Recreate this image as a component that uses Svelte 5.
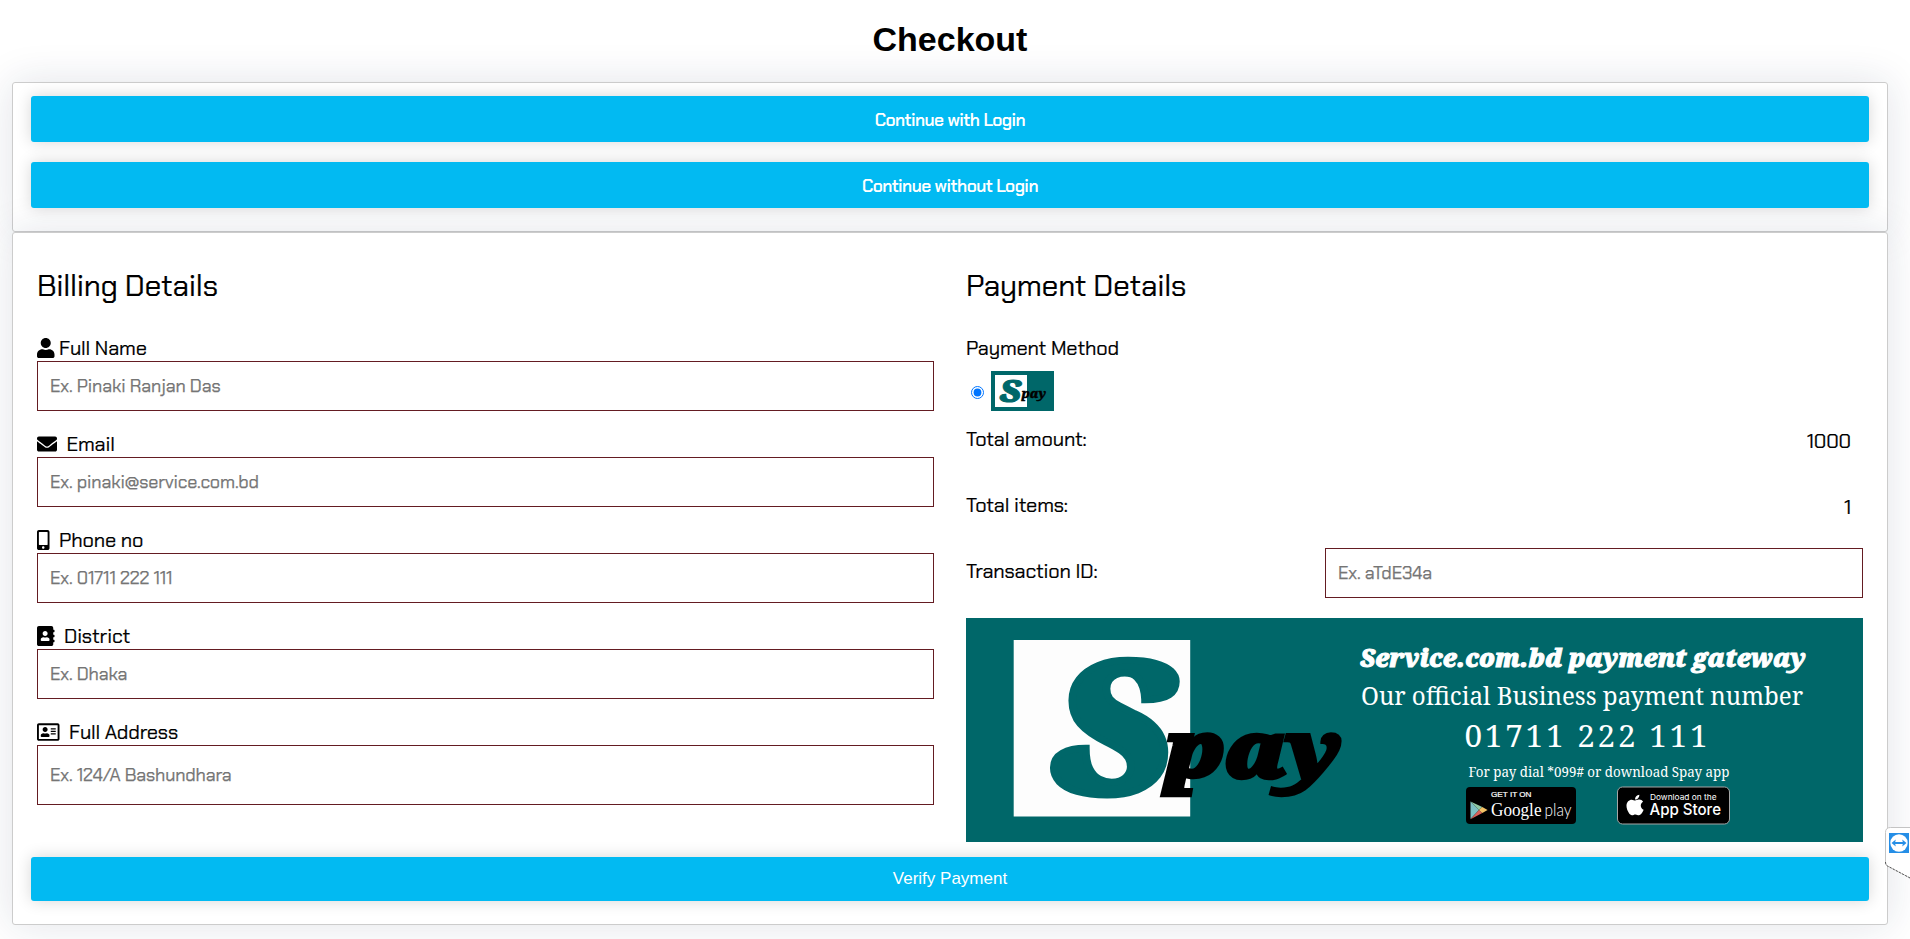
<script>
  const fields = [
    {
      icon: 'user', w: 448, label: 'Full Name', gap: 4.5, placeholder: 'Ex. Pinaki Ranjan Das',
      d: 'M224 256c70.7 0 128-57.3 128-128S294.7 0 224 0 96 57.3 96 128s57.3 128 128 128zm89.6 32h-16.7c-22.2 10.2-46.9 16-72.9 16s-50.600-5.800-72.900-16h-16.700C60.200 288 0 348.200 0 422.400V464c0 26.500 21.500 48 48 48h352c26.500 0 48-21.500 48-48v-41.600c0-74.200-60.200-134.400-134.400-134.400z'
    },
    {
      icon: 'envelope', w: 512, label: 'Email', gap: 9.5, placeholder: 'Ex. pinaki@service.com.bd',
      d: 'M502.3 190.8c3.9-3.1 9.7-.2 9.7 4.7V400c0 26.500-21.500 48-48 48H48c-26.500 0-48-21.500-48-48V195.600c0-5 5.700-7.800 9.700-4.700 22.400 17.400 52.100 39.500 154.100 113.600 21.100 15.400 56.700 47.800 92.200 47.600 35.700.3 72-32.800 92.300-47.600 102-74.100 131.600-96.300 154-113.700zM256 320c23.200.4 56.600-29.200 73.400-41.400 132.700-96.300 142.800-104.700 173.400-128.700 5.800-4.500 9.200-11.500 9.200-18.900v-19c0-26.500-21.500-48-48-48H48c-26.500 0-48 21.500-48 48v19c0 7.400 3.400 14.300 9.200 18.900 30.600 23.900 40.700 32.400 173.400 128.700 16.800 12.200 50.200 41.800 73.400 41.400z'
    },
    {
      icon: 'mobile', w: 320, label: 'Phone no', gap: 9.5, placeholder: 'Ex. 01711 222 111',
      d: 'M272 0H48C21.500 0 0 21.500 0 48v416c0 26.500 21.500 48 48 48h224c26.500 0 48-21.500 48-48V48c0-26.500-21.500-48-48-48zM160 480c-17.700 0-32-14.300-32-32s14.300-32 32-32 32 14.300 32 32-14.300 32-32 32zm112-108c0 6.600-5.400 12-12 12H60c-6.600 0-12-5.400-12-12V60c0-6.600 5.400-12 12-12h200c6.600 0 12 5.400 12 12v312z'
    },
    {
      icon: 'book', w: 448, label: 'District', gap: 9.5, placeholder: 'Ex. Dhaka',
      d: 'M436 160c6.600 0 12-5.400 12-12v-40c0-6.600-5.400-12-12-12h-20V48c0-26.500-21.500-48-48-48H48C21.500 0 0 21.500 0 48v416c0 26.500 21.500 48 48 48h320c26.500 0 48-21.500 48-48v-48h20c6.600 0 12-5.400 12-12v-40c0-6.600-5.400-12-12-12h-20v-64h20c6.600 0 12-5.400 12-12v-40c0-6.600-5.400-12-12-12h-20v-64h20zm-228-32c35.300 0 64 28.700 64 64s-28.700 64-64 64-64-28.700-64-64 28.700-64 64-64zm112 236.800c0 10.600-10 19.200-22.400 19.200H118.400C106 384 96 375.400 96 364.800v-19.200c0-31.800 30.100-57.600 67.200-57.600h5c12.300 5.100 25.700 8 39.800 8s27.600-2.900 39.800-8h5c37.100 0 67.200 25.800 67.200 57.600v19.200z'
    },
    {
      icon: 'card', w: 576, label: 'Full Address', gap: 9.5, placeholder: 'Ex. 124/A Bashundhara', area: true,
      d: 'M528 32H48C21.500 32 0 53.500 0 80v352c0 26.500 21.500 48 48 48h480c26.500 0 48-21.500 48-48V80c0-26.500-21.500-48-48-48zm0 400H48V80h480v352zM208 256c35.300 0 64-28.700 64-64s-28.700-64-64-64-64 28.700-64 64 28.700 64 64 64zm-89.600 128h179.200c12.400 0 22.400-8.600 22.400-19.200v-19.200c0-31.800-30.100-57.600-67.200-57.600-10.800 0-18.700 8-44.800 8-26.900 0-33.400-8-44.800-8-37.100 0-67.200 25.800-67.200 57.600v19.200c0 10.600 10 19.200 22.400 19.200zM360 320h112c4.400 0 8-3.600 8-8v-16c0-4.400-3.600-8-8-8H360c-4.400 0-8 3.600-8 8v16c0 4.400 3.600 8 8 8zm0-64h112c4.400 0 8-3.600 8-8v-16c0-4.400-3.600-8-8-8H360c-4.400 0-8 3.600-8 8v16c0 4.400 3.600 8 8 8zm0-64h112c4.400 0 8-3.600 8-8v-16c0-4.400-3.600-8-8-8H360c-4.400 0-8 3.600-8 8v16c0 4.400 3.600 8 8 8z'
    }
  ];
</script>

<main>
  <h1>Checkout</h1>

  <section class="card login">
    <button class="btn">Continue with Login</button>
    <button class="btn">Continue without Login</button>
  </section>

  <section class="card form">
    <div class="columns">
      <div class="col">
        <h2>Billing Details</h2>
        {#each fields as f}
          <label class="field">
            <span class="label" style="gap:{f.gap}px">
              <svg width={(f.w / 512) * 20} height="20" viewBox="0 0 {f.w} 512"><path d={f.d} /></svg>
              <span>{f.label}</span>
            </span>
            {#if f.area}
              <textarea placeholder={f.placeholder}></textarea>
            {:else}
              <input type="text" placeholder={f.placeholder} />
            {/if}
          </label>
        {/each}
      </div>

      <div class="col">
        <h2>Payment Details</h2>
        <div class="label"><span>Payment Method</span></div>
        <div class="method">
          <input type="radio" name="method" checked />
          <svg class="logo" width="63" height="40" viewBox="0 0 63 40">
            <rect width="63" height="40" fill="#006769" />
            <rect x="4" y="4" width="32" height="32" fill="#fff" />
            <text class="slab" x="8.300" y="30.500" font-size="31.500" fill="#006769" stroke="#006769" stroke-width="1" textLength="22" lengthAdjust="spacingAndGlyphs">S</text>
            <text class="slab" x="30.800" y="27" font-size="13" stroke="#000" stroke-width=".4" textLength="24.500" lengthAdjust="spacingAndGlyphs">pay</text>
          </svg>
        </div>
        <div class="row"><span>Total amount:</span><span class="value">1000</span></div>
        <div class="row"><span>Total items:</span><span class="value">1</span></div>
        <div class="row last"><span>Transaction ID:</span><input type="text" placeholder="Ex. aTdE34a" /></div>

        <svg class="banner" width="897" height="224" viewBox="0 0 897 224">
          <rect width="897" height="224" fill="#006769" />
          <rect x="47.700" y="22" width="176.500" height="176.500" fill="#fdfdfd" />
          <text class="slab" x="84" y="175" font-size="182" fill="#006769" stroke="#006769" stroke-width="7" textLength="124" lengthAdjust="spacingAndGlyphs">S</text>
          <text class="slab" x="201" y="158.500" font-size="77" stroke="#000" stroke-width="4.500" textLength="175" lengthAdjust="spacingAndGlyphs">pay</text>
          <g fill="#fff">
            <text class="slab" x="394" y="49" font-size="25" stroke="#fff" stroke-width="1" textLength="446" lengthAdjust="spacingAndGlyphs">Service.com.bd payment gateway</text>
            <text class="serif" x="395" y="87.300" font-size="24.500" textLength="442" lengthAdjust="spacingAndGlyphs">Our official Business payment number</text>
            <text class="serif" x="498.500" y="128.700" font-size="31.500" textLength="243" lengthAdjust="spacing">01711 222 111</text>
            <text class="serif" x="502.500" y="158.700" font-size="13.500" textLength="261" lengthAdjust="spacingAndGlyphs">For pay dial *099# or download Spay app</text>
          </g>

          <rect x="500" y="169" width="110" height="37" rx="4" />
          <path d="M504.500 183.500v17.500l8.500-9z" fill="#7cc0c4" />
          <path d="M504.500 183.500l8.500 8.500 3.300-3z" fill="#8fc9a4" />
          <path d="M504.500 201.300l8.500-9.300 3.300 3z" fill="#d9605a" />
          <path d="M516.300 189l5.300 3-5.300 3-3.300-3z" fill="#f2c265" />
          <g fill="#fff">
            <text class="sans" x="525" y="178.700" font-size="7.700" stroke="#fff" stroke-width=".2" textLength="40.500" lengthAdjust="spacingAndGlyphs">GET IT ON</text>
            <text class="times" x="525" y="197.700" font-size="18.500" textLength="50.500" lengthAdjust="spacingAndGlyphs">Google</text>
            <text class="lato" x="578.500" y="197.700" font-size="17.500" textLength="27" lengthAdjust="spacingAndGlyphs">play</text>
          </g>

          <rect x="651.500" y="169" width="112" height="37" rx="5" stroke="#a6a6a6" />
          <path transform="translate(660.300 175.200) scale(.0455 .046)" fill="#fff" d="M318.700 268.700c-.2-36.700 16.400-64.400 50-84.800-18.800-26.900-47.200-41.700-84.700-44.600-35.500-2.800-74.300 20.700-88.500 20.700-15 0-49.400-19.700-76.400-19.700C63.300 141.200 4 184.800 4 273.500q0 39.300 14.400 81.200c12.800 36.700 59 126.700 107.200 125.200 25.200-.6 43-17.900 75.800-17.900 31.800 0 48.300 17.900 76.400 17.900 48.600-.7 90.400-82.500 102.600-119.300-65.200-30.700-61.700-90-61.700-91.900zm-56.600-164.200c27.300-32.400 24.800-61.900 24-72.500-24.100 1.400-52 16.400-67.900 34.900-17.500 19.800-27.800 44.300-25.600 71.900 26.100 2 49.900-11.400 69.500-34.300z" />
          <g fill="#fff">
            <text class="inter" x="684" y="182.300" font-size="7.800" textLength="66.500" lengthAdjust="spacingAndGlyphs">Download on the</text>
            <text class="inter medium" x="683.500" y="197.300" font-size="16" textLength="71.500" lengthAdjust="spacingAndGlyphs">App Store</text>
          </g>
        </svg>
      </div>
    </div>
    <button class="btn verify">Verify Payment</button>
  </section>
</main>

<svg class="widget" width="25" height="52" viewBox="0 0 25 52">
  <path d="M26 .5H5.500q-5 0-5 5V36q0 2 2 3l23.500 12.500" fill="#fff" stroke="#c4c4c4" />
  <path d="M.5 35q0 3 2 4l23.500 12.500" fill="none" stroke="#555" stroke-dasharray="2 1.500" />
  <rect x="4" y="6" width="20" height="20" fill="#258ee6" />
  <circle cx="14" cy="16" r="8.700" fill="#fff" />
  <path d="M6.500 16l4.300-3.600-.6 2.500h7.600l-.6-2.500 4.300 3.600-4.300 3.600.6-2.500h-7.600l.6 2.500z" fill="#258ee6" />
</svg>

<style>
  :global(body) {
    background: #fff;
    height: 939px;
    overflow: hidden;
  }
  main {
    box-sizing: border-box;
    width: 1900px;
    padding: 19px 12px 0;
    font-family: 'Chakra Petch', Roboto, sans-serif;
    color: #000;
  }
  h1 {
    margin: 0 0 23px;
    font: bold 34px/40px 'Liberation Sans', Arial, sans-serif;
    text-align: center;
  }
  .card {
    box-sizing: border-box;
    border: 1px solid #ccc;
    border-radius: 3px;
    box-shadow: 0 0 40px rgba(25, 35, 75, 0.13);
  }
  .login {
    display: flex;
    flex-direction: column;
    gap: 20px;
    height: 150px;
    padding: 13px 18px;
  }
  .form {
    height: 693px;
    padding: 34px 18px 0;
    background: #fff;
  }
  .btn {
    display: block;
    width: 100%;
    height: 46px;
    padding: 1px 0 0;
    border: 0;
    border-radius: 3px;
    background: #02baf2;
    box-shadow: 0 0 16px rgba(0, 0, 0, 0.16);
    color: #fff;
    font: 600 17.3px 'Chakra Petch', Roboto, sans-serif;
    letter-spacing: -0.54px;
  }
  .verify {
    height: 44px;
    padding: 0;
    font: 17px 'Liberation Sans', Arial, sans-serif;
    letter-spacing: 0;
  }
  .columns {
    display: grid;
    grid-template-columns: 897px 897px;
    gap: 32px;
    height: 590px;
    padding: 0 6px;
    -webkit-text-stroke: 0.2px;
  }
  .columns svg {
    -webkit-text-stroke: 0;
  }
  h2 {
    margin: 0 0 33px;
    font-size: 30px;
    font-weight: 400;
    line-height: 37px;
    letter-spacing: -0.25px;
  }
  .field {
    display: block;
    margin-bottom: 22px;
  }
  .label {
    display: flex;
    align-items: center;
    height: 24px;
    font-size: 20px;
    line-height: 24px;
    letter-spacing: -0.15px;
  }
  .label svg {
    display: block;
    margin-top: -3px;
  }
  .label span {
    margin-top: -2px;
  }
  input[type='text'],
  textarea {
    display: block;
    box-sizing: border-box;
    width: 100%;
    height: 50px;
    margin: 0;
    padding: 0 12px;
    border: 1px solid #641c22;
    border-radius: 0;
    background: transparent;
    font: 18px/24px 'Chakra Petch', Roboto, sans-serif;
    letter-spacing: -0.14px;
    outline: 0;
  }
  textarea {
    height: 60px;
    padding: 17px 12px;
    resize: none;
    overflow: hidden;
  }
  ::placeholder {
    color: #757575;
    opacity: 1;
    -webkit-text-stroke: 0.25px #757575;
  }
  .method {
    display: flex;
    align-items: center;
    gap: 7px;
    height: 40px;
    margin: 10px 0 12px;
    padding-left: 5px;
  }
  .method input {
    width: 13px;
    height: 13px;
    margin: 3px 0 0;
  }
  .row {
    display: flex;
    justify-content: space-between;
    height: 50px;
    margin-bottom: 16px;
    font-size: 20px;
    line-height: 32px;
    letter-spacing: -0.15px;
  }
  .row.last {
    margin-bottom: 13px;
  }
  .row .value {
    margin: 2px 12px 0 0;
  }
  .row input[type='text'] {
    width: 538px;
    margin-top: -7px;
  }
  .logo,
  .banner {
    display: block;
    overflow: visible;
  }
  .slab {
    font-family: 'Noto Serif', 'DejaVu Serif', serif;
    font-weight: 900;
    font-style: italic;
  }
  .serif {
    font-family: 'Noto Serif', 'DejaVu Serif', serif;
  }
  .times {
    font-family: 'Liberation Serif', serif;
  }
  .sans {
    font-family: 'Liberation Sans', sans-serif;
  }
  .lato {
    font-family: Lato, sans-serif;
    font-weight: 300;
  }
  .inter {
    font-family: Inter, sans-serif;
  }
  .medium {
    font-weight: 500;
  }
  .widget {
    position: absolute;
    top: 827px;
    right: 0;
  }
</style>
